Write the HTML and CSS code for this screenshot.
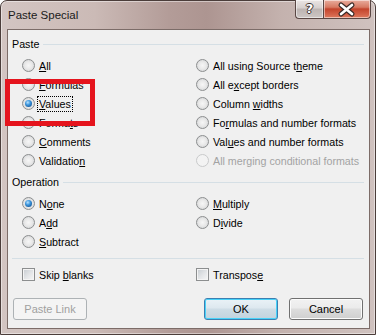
FILE: index.html
```html
<!DOCTYPE html>
<html>
<head>
  <title>Paste Special</title>
  <link rel="stylesheet" href="styles.css">
</head>
<body>
  <div class="window">
    <div class="titlebar">
      <span class="title">Paste Special</span>
      <div class="caption-buttons">
        <div class="cap-btn help">?</div>
        <div class="cap-btn close">
          <svg width="45" height="17" viewBox="0 0 45 17">
            <path d="M17 4 L28 13 M28 4 L17 13" stroke="#3b2a27" stroke-width="5" stroke-linecap="round"/>
            <path d="M17 4 L28 13 M28 4 L17 13" stroke="#ffffff" stroke-width="2.6" stroke-linecap="round"/>
          </svg>
        </div>
      </div>
    </div>

    <div class="client">
      <div class="group-head"><span>Paste</span><i></i></div>
      <div class="options">
        <div class="opt"><span class="radio"></span><span><u>A</u>ll</span></div>
        <div class="opt"><span class="radio"></span><span>All using Source t<u>h</u>eme</span></div>
        <div class="opt"><span class="radio"></span><span><u>F</u>ormulas</span></div>
        <div class="opt"><span class="radio"></span><span>All e<u>x</u>cept borders</span></div>
        <div class="opt"><span class="radio checked"></span><span class="focus"><u>V</u>alues</span></div>
        <div class="opt"><span class="radio"></span><span>Column <u>w</u>idths</span></div>
        <div class="opt"><span class="radio"></span><span>Forma<u>t</u>s</span></div>
        <div class="opt"><span class="radio"></span><span>Fo<u>r</u>mulas and number formats</span></div>
        <div class="opt"><span class="radio"></span><span><u>C</u>omments</span></div>
        <div class="opt"><span class="radio"></span><span>Val<u>u</u>es and number formats</span></div>
        <div class="opt"><span class="radio"></span><span>Validatio<u>n</u></span></div>
        <div class="opt disabled"><span class="radio"></span><span>All merging conditional formats</span></div>
      </div>

      <div class="group-head"><span>Operation</span><i></i></div>
      <div class="options">
        <div class="opt"><span class="radio checked"></span><span>N<u>o</u>ne</span></div>
        <div class="opt"><span class="radio"></span><span><u>M</u>ultiply</span></div>
        <div class="opt"><span class="radio"></span><span>A<u>d</u>d</span></div>
        <div class="opt"><span class="radio"></span><span>D<u>i</u>vide</span></div>
        <div class="opt"><span class="radio"></span><span><u>S</u>ubtract</span></div>
      </div>

      <div class="separator"></div>

      <div class="options checks">
        <div class="opt"><span class="checkbox"></span><span>Skip <u>b</u>lanks</span></div>
        <div class="opt"><span class="checkbox"></span><span>Transpos<u>e</u></span></div>
      </div>

      <div class="buttons">
        <button class="btn" disabled>Paste Link</button>
        <span class="spacer"></span>
        <button class="btn default">OK</button>
        <button class="btn">Cancel</button>
      </div>
    </div>

    <div class="highlight"></div>
  </div>
</body>
</html>
```

FILE: styles.css
```css
body {
  margin: 0;
  background-color: #ffffff;
  font-family: "Segoe UI", "Liberation Sans", sans-serif;
  font-size: 10.7px;
  color: #000;
}

.window {
  position: relative;
  width: 376px;
  height: 335px;
  box-sizing: border-box;
  border: 1px solid #4b3d3a;
  border-radius: 7px 7px 0 0;
  padding: 0 5px 5px 6px;
  background: linear-gradient(90deg, #d3c5c2 0%, #cbbab6 25%, #b39c98 45%, #ad9591 55%, #c4b2ae 75%, #d0c2bf 100%);
  box-shadow: inset 0 0 0 1px rgba(255, 255, 255, 0.45);
}

.titlebar {
  height: 28px;
  display: flex;
  align-items: center;
  padding-left: 1px;
}

.title {
  font-size: 11.5px;
  color: #1a1a1a;
  margin-top: -1px;
}

.caption-buttons {
  margin-left: auto;
  margin-right: -1px;
  align-self: flex-start;
  margin-top: -1px;
  display: flex;
}

.cap-btn {
  height: 18px;
  border: 1px solid #5a4744;
  border-top: none;
  box-shadow: inset 0 0 0 1px rgba(255, 255, 255, 0.5);
}

.help {
  width: 27px;
  border-radius: 0 0 0 4px;
  border-right: none;
  background: linear-gradient(#ebe5e4 0%, #d6cfcd 45%, #bdb4b2 50%, #cdc6c4 100%);
  text-align: center;
  font-family: "DejaVu Sans", sans-serif;
  font-weight: bold;
  font-size: 13px;
  line-height: 17px;
  color: #fff;
  text-shadow: 1px 0 0 #3f3230, -1px 0 0 #3f3230, 0 1px 0 #3f3230, 0 -1px 0 #3f3230;
}

.close {
  width: 46px;
  border-radius: 0 0 4px 0;
  background: linear-gradient(#e9ad9e 0%, #d77a63 40%, #c3442c 50%, #d36148 80%, #dd7a5e 100%);
}

.close svg {
  display: block;
  margin-top: 1px;
}

.client {
  height: 300px;
  box-sizing: border-box;
  border: 1px solid #7c6c68;
  background-color: #f0f0f0;
  padding: 7px 5px 8px 0;
}

.group-head {
  display: flex;
  align-items: center;
  height: 14px;
  padding-left: 4px;
}

.group-head i {
  flex: 1;
  height: 1px;
  margin-left: 4px;
  background-color: #d5dfe5;
}

.options {
  display: grid;
  grid-template-columns: 174px 1fr;
  grid-auto-rows: 19px;
  padding-left: 14px;
  margin-top: 5px;
  margin-bottom: 5px;
}

.opt {
  display: flex;
  align-items: center;
  gap: 4px;
  white-space: nowrap;
}

.opt.disabled {
  color: #a3a3a3;
}

.radio {
  position: relative;
  width: 13px;
  height: 13px;
  box-sizing: border-box;
  border-radius: 50%;
  border: 1px solid #8c8e8f;
  background: radial-gradient(circle at 50% 50%, #f6f6f6 0%, #e9e9e9 45%, #cdcfd1 100%);
  flex-shrink: 0;
}

.disabled .radio {
  border-color: #c9cacb;
  background: #f3f3f3;
}

.radio.checked::after {
  content: "";
  position: absolute;
  left: 2px;
  top: 2px;
  width: 7px;
  height: 7px;
  border-radius: 50%;
  background: radial-gradient(circle at 40% 35%, #b8e2ff 0%, #3b95dc 40%, #165a9c 80%, #0e3d6d 100%);
}

.focus {
  outline: 1px dotted #000;
  outline-offset: 1px;
}

.separator {
  height: 1px;
  margin: 7px 0 0 4px;
  background-color: #d5dfe5;
}

.options.checks {
  margin-top: 6px;
  margin-bottom: 0;
}

.checkbox {
  width: 13px;
  height: 13px;
  box-sizing: border-box;
  border: 1px solid #8c8e8f;
  background: linear-gradient(135deg, #c6cbd0 0%, #e4e6e8 55%, #f6f6f6 100%);
  box-shadow: inset 0 0 0 1px #f4f4f4;
  flex-shrink: 0;
}

.buttons {
  display: flex;
  margin-top: 14px;
  padding-left: 5px;
  padding-right: 1px;
  gap: 11px;
}

.spacer {
  flex: 1;
}

.btn {
  width: 74px;
  height: 22px;
  font-family: inherit;
  font-size: 11px;
  color: #000;
  border: 1px solid #707070;
  border-radius: 3px;
  background: linear-gradient(#f2f2f2 0%, #ebebeb 45%, #dddddd 50%, #cfcfcf 100%);
  box-shadow: inset 0 0 0 1px #fcfcfc;
  padding: 0;
}

.btn:disabled {
  color: #a0a0a0;
  border-color: #adb2b5;
  background: #f4f4f4;
  box-shadow: none;
}

.btn.default {
  border-color: #3c7fb1;
  box-shadow: inset 0 0 0 1px #48d2f9;
  background: linear-gradient(#eaf2f7 0%, #dde8ef 45%, #cfdde6 50%, #c2d3de 100%);
}

.highlight {
  position: absolute;
  left: 4px;
  top: 78px;
  width: 90px;
  height: 47px;
  box-sizing: border-box;
  border: 5px solid #e5141d;
}
```
